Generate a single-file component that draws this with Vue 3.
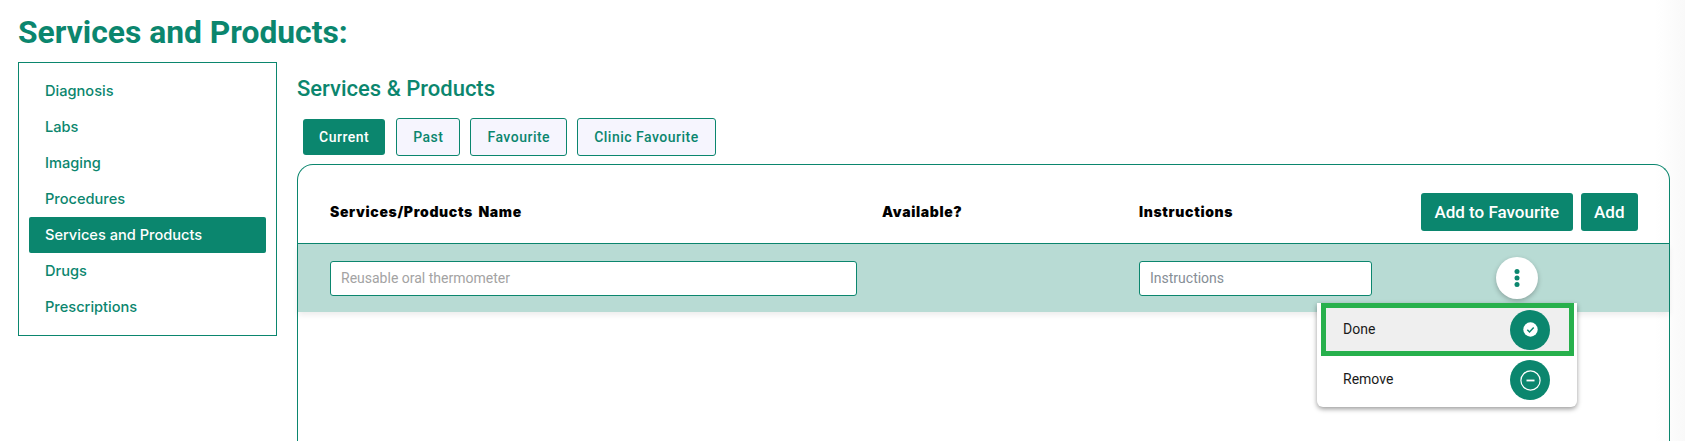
<script setup>
const navItems = ['Diagnosis', 'Labs', 'Imaging', 'Procedures', 'Services and Products', 'Drugs', 'Prescriptions']
const tabs = ['Current', 'Past', 'Favourite', 'Clinic Favourite']
</script>

<template>
  <div class="page">
    <h1 class="page-title">Services and Products:</h1>
    <div class="layout">
      <ul class="side-nav">
        <li v-for="item in navItems" :key="item" class="nav-item" :class="{ active: item === 'Services and Products' }">
          {{ item }}
        </li>
      </ul>

      <div class="content">
        <h2 class="section-title">Services &amp; Products</h2>
        <div class="tabs">
          <button v-for="tab in tabs" :key="tab" class="tab" :class="{ active: tab === 'Current' }">{{ tab }}</button>
        </div>

        <div class="card">
          <div class="table-row table-head">
            <div class="th">Services/Products Name</div>
            <div class="th">Available?</div>
            <div class="th">Instructions</div>
            <div class="actions">
              <button class="btn">Add to Favourite</button>
              <button class="btn">Add</button>
            </div>
          </div>

          <div class="table-row table-body">
            <input class="field" type="text" placeholder="Reusable oral thermometer" />
            <div></div>
            <input class="field short" type="text" placeholder="Instructions" />
            <div class="menu-cell">
              <button class="kebab">
                <svg width="6" height="20" viewBox="0 0 6 20"><circle cx="3" cy="3.5" r="2.5" /><circle cx="3" cy="10" r="2.5" /><circle cx="3" cy="16.5" r="2.5" /></svg>
              </button>
              <div class="menu">
                <div class="menu-item selected">
                  <span class="menu-label">Done</span>
                  <span class="menu-icon">
                    <svg width="15" height="15" viewBox="0 0 15 15">
                      <circle cx="7.5" cy="7.5" r="7.2" fill="#fff" />
                      <path d="M4.3 7.8l2.2 2.2 4.2-4.4" fill="none" stroke="#0b866e" stroke-width="1.5" />
                    </svg>
                  </span>
                </div>
                <div class="menu-item">
                  <span class="menu-label">Remove</span>
                  <span class="menu-icon">
                    <svg width="21" height="21" viewBox="0 0 21 21">
                      <circle cx="10.5" cy="10.5" r="9.6" fill="none" stroke="#fff" stroke-width="1.2" />
                      <path d="M6.5 10.5h8" fill="none" stroke="#fff" stroke-width="1.8" />
                    </svg>
                  </span>
                </div>
              </div>
            </div>
          </div>
        </div>
      </div>
    </div>
  </div>
</template>

<style>
html, body {
  margin: 0;
  background: #fff;
  overflow: hidden;
}
</style>

<style scoped>
.page {
  height: 441px;
  overflow: hidden;
  box-sizing: border-box;
  padding: 12px 15px 0 18px;
  font-family: Roboto, sans-serif;
  background: linear-gradient(to right, #fff calc(100% - 30px), #f9f9f9);
}
.page-title {
  margin: 0;
  font-size: 31.8px;
  line-height: 40px;
  font-weight: 700;
  color: #0b866e;
}
.layout {
  display: flex;
  align-items: flex-start;
  margin-top: 10px;
}
.side-nav {
  width: 259px;
  height: 274px;
  box-sizing: border-box;
  margin: 0;
  padding: 10px 10px;
  list-style: none;
  border: 1px solid #0b866e;
  flex-shrink: 0;
}
.nav-item {
  height: 36px;
  line-height: 36px;
  padding-left: 16px;
  border-radius: 2px;
  font-family: Inter, sans-serif;
  font-size: 14.6px;
  font-weight: 500;
  color: #0b866e;
}
.nav-item.active {
  background: #0b866e;
  color: #fff;
}
.content {
  flex: 1;
  margin-left: 20px;
  min-width: 0;
}
.section-title {
  margin: 14px 0 0;
  font-size: 22px;
  line-height: 26px;
  font-weight: 500;
  color: #0b866e;
}
.tabs {
  display: flex;
  gap: 10px;
  margin: 16px 0 0 6px;
  align-items: center;
}
.tab {
  height: 38px;
  padding: 0 16px;
  border: 1px solid #0b866e;
  border-radius: 3px;
  background: #f6f5fe;
  color: #0b866e;
  font-family: Roboto, sans-serif;
  font-size: 14px;
  font-weight: 500;
  letter-spacing: 0.5px;
}
.tab.active {
  height: 36px;
  margin-right: 1px;
  background: #0b866e;
  color: #fff;
  border: 0;
}
.card {
  margin-top: 8px;
  height: 300px;
  border: 1px solid #0b866e;
  border-radius: 16px 16px 0 0;
  border-bottom: 0;
  box-sizing: border-box;
}
.table-row {
  display: grid;
  grid-template-columns: 552px 257px 233px 1fr;
  padding-left: 32px;
  align-items: center;
}
.table-head {
  height: 79px;
  padding-top: 15px;
  box-sizing: border-box;
  border-bottom: 1px solid #0b866e;
}
.th {
  font-family: Inter, sans-serif;
  font-size: 14px;
  font-weight: 900;
  letter-spacing: 0.65px;
  word-spacing: 2px;
  color: #000;
}
.actions {
  display: flex;
  justify-content: flex-end;
  gap: 8px;
  padding-right: 31px;
}
.btn {
  height: 38px;
  padding: 0 13.5px;
  border: 0;
  border-radius: 3px;
  background: #0b866e;
  color: #fff;
  font-family: Roboto, sans-serif;
  font-size: 17px;
  font-weight: 500;
}
.table-body {
  height: 68px;
  background: #b8dbd4;
  box-shadow: 0 3px 6px rgba(0, 0, 0, 0.08);
}
.field {
  width: 527px;
  height: 35px;
  box-sizing: border-box;
  padding: 0 10px;
  border: 1px solid #0b866e;
  border-radius: 3px;
  background: #fff;
  font-family: Roboto, sans-serif;
  font-size: 14px;
  outline: none;
}
.field.short {
  width: 233px;
}
.field::placeholder {
  color: #a3a3a3;
}
.field.short::placeholder {
  color: #868e96;
}
.menu-cell {
  position: relative;
  display: flex;
  justify-content: center;
  padding-right: 7px;
}
.kebab {
  width: 42px;
  height: 42px;
  padding: 0;
  border: 0;
  border-radius: 50%;
  background: #fff;
  box-shadow: 0 2px 5px rgba(0, 0, 0, 0.25);
  display: flex;
  align-items: center;
  justify-content: center;
}
.kebab svg {
  fill: #0b866e;
}
.menu {
  position: absolute;
  top: 46px;
  left: -55px;
  width: 260px;
  height: 104px;
  background: #fff;
  border-radius: 0 0 6px 6px;
  box-shadow: 0 2px 5px rgba(0, 0, 0, 0.4);
}
.menu-item {
  display: flex;
  align-items: center;
  justify-content: space-between;
  box-sizing: border-box;
  height: 48px;
  padding: 0 27px 0 26px;
  font-size: 14px;
  color: #1a1a1a;
}
.menu-label {
  padding-bottom: 2px;
}
.menu-item.selected {
  height: 53px;
  margin: 0 3px 0 4px;
  padding: 0 19px 0 17px;
  background: #efefef;
  border: 5px solid #27b04c;
}
.menu-icon {
  width: 40px;
  height: 40px;
  border-radius: 50%;
  background: #0b866e;
  display: flex;
  align-items: center;
  justify-content: center;
  flex-shrink: 0;
}
</style>
